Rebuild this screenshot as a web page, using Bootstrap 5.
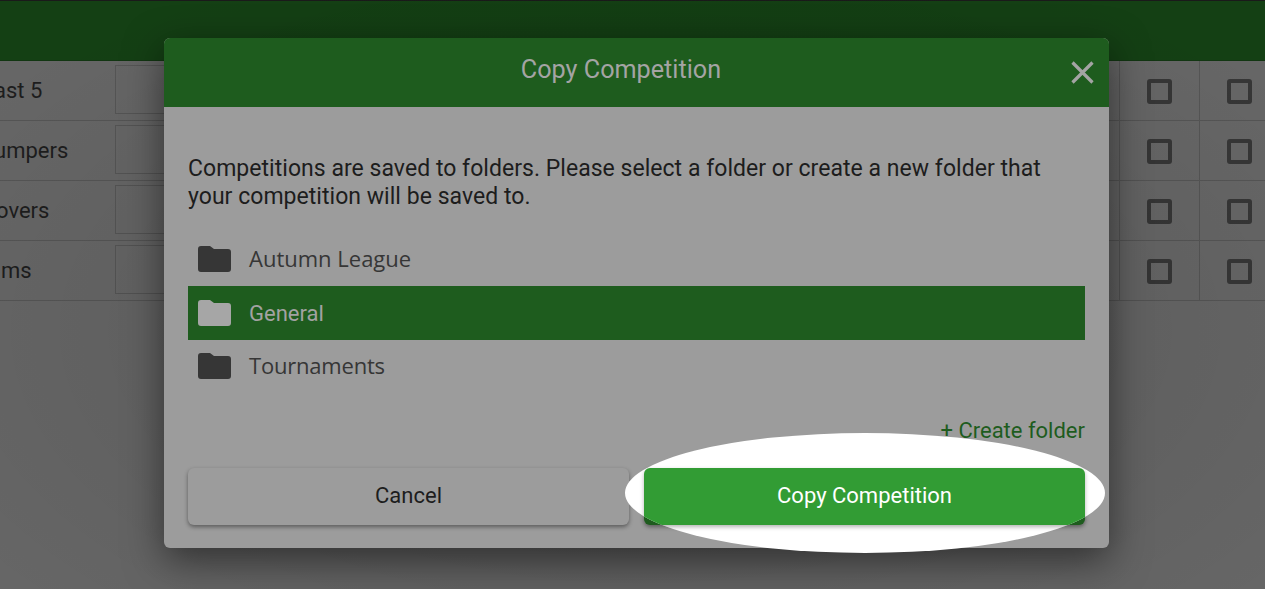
<!DOCTYPE html>
<html lang="en">
<head>
<meta charset="utf-8">
<title>Copy Competition</title>
<link href="https://cdn.jsdelivr.net/npm/bootstrap@5.3.0/dist/css/bootstrap.min.css" rel="stylesheet">
<style>
html,body{height:100%;overflow:hidden}
body{background:#666;font-family:Roboto,"Liberation Sans",sans-serif;color:#1d1d1d}
.stage{position:relative;height:589px;width:1265px;overflow:hidden}
.topbar{height:61px;background:#144014;border-top:1px solid #1a1a1a;border-bottom:1px solid #123612}
.grid-row{height:60px;border-bottom:1px solid #555;font-size:22px;color:#1d1d1d;margin-right:-14px}
.row-name{width:115px;flex:none;overflow:hidden;white-space:nowrap;height:100%;padding-top:13px}
.name-a{margin-left:-6px;width:121px}
.name-b{margin-left:-6px;width:121px}
.name-c{margin-left:-4px;width:119px}
.name-d{padding-left:1px}
.row-box{width:200px;height:49px;flex:none;border:1px solid #555;align-self:flex-start;margin-top:4px}
.row-cell{width:80px;flex:none;height:100%;border-left:1px solid #555;padding-top:2px}
.tick{width:25px;height:25px;border:4px solid #363636;border-radius:3px;display:block}
.vignette{position:absolute;inset:0;pointer-events:none;background:radial-gradient(ellipse 800px 420px at 640px 330px,rgba(0,0,0,.16),rgba(0,0,0,0) 100%)}
.dlg{position:absolute;left:164px;top:38px;width:945px;height:510px;border:0;border-radius:6px;background:#9c9c9c;box-shadow:0 12px 38px rgba(0,0,0,.5);color:#1d1d1d}
.dlg-head{height:69px;background:#1e5c1e;border:0;border-radius:6px 6px 0 0;padding:0;position:relative;color:#a4a4a4}
.dlg-title{font-size:25.2px;font-weight:400;line-height:1;width:914px;text-align:center;margin:0;position:relative;top:-3px}
.dlg-close{position:absolute;left:907px;top:23px;background:none;border:0;padding:0;line-height:0}
.dlg-body{padding:48px 24px 0 24px}
.intro{font-size:23px;line-height:28px;margin:0 0 22px;letter-spacing:.035px}
.folders{margin:0;padding:0;list-style:none}
.folder-row{height:53px;padding:0 0 2px 10px;display:flex;align-items:center;gap:18px;font-family:"Open Sans","Noto Sans",sans-serif;font-size:22px;color:#363636}
.folder-row.picked{height:54px;padding-bottom:0;background:#1e5c1e;color:#a2a2a2;font-family:Roboto,sans-serif}
.folder-narrow{letter-spacing:-.2px}
.folder-row svg{fill:#363636;flex:none}
.folder-row.picked svg{fill:#a6a6a6}
.add-folder{font-size:22px;color:#1e5c1e;text-decoration:none;display:block;text-align:right;line-height:26px;margin-top:25px}
.actions{margin-top:24px;gap:15px}
.act{flex:1 1 0;height:57px;border:0;border-radius:6px;font-size:22px;padding:0 0 2px}
.act-plain{background:#9c9c9c;color:#1d1d1d;box-shadow:0 2px 4px rgba(0,0,0,.42)}
.act-dim{background:#1e5c1e;box-shadow:0 2px 4px rgba(0,0,0,.42)}
.spot{position:absolute;left:461px;top:395px;width:480px;height:120px;border-radius:50%;background:#fff;overflow:hidden}
.act-live{position:absolute;left:19px;top:35px;width:441px;height:57px;background:#329c34;color:#fff;box-shadow:0 2px 4px rgba(0,0,0,.3)}
.act-live:hover{background:#329c34;color:#fff}
</style>
</head>
<body>
<div class="stage">
  <div class="topbar"></div>
  <div class="grid-row d-flex align-items-center">
    <div class="row-name name-a">ast 5</div><div class="row-box"></div><div class="flex-grow-1"></div>
    <div class="row-cell d-flex align-items-center justify-content-center"><span class="tick"></span></div>
    <div class="row-cell d-flex align-items-center justify-content-center"><span class="tick"></span></div>
  </div>
  <div class="grid-row d-flex align-items-center">
    <div class="row-name name-b">umpers</div><div class="row-box"></div><div class="flex-grow-1"></div>
    <div class="row-cell d-flex align-items-center justify-content-center"><span class="tick"></span></div>
    <div class="row-cell d-flex align-items-center justify-content-center"><span class="tick"></span></div>
  </div>
  <div class="grid-row d-flex align-items-center">
    <div class="row-name name-c">overs</div><div class="row-box"></div><div class="flex-grow-1"></div>
    <div class="row-cell d-flex align-items-center justify-content-center"><span class="tick"></span></div>
    <div class="row-cell d-flex align-items-center justify-content-center"><span class="tick"></span></div>
  </div>
  <div class="grid-row d-flex align-items-center">
    <div class="row-name name-d">ms</div><div class="row-box"></div><div class="flex-grow-1"></div>
    <div class="row-cell d-flex align-items-center justify-content-center"><span class="tick"></span></div>
    <div class="row-cell d-flex align-items-center justify-content-center"><span class="tick"></span></div>
  </div>
  <div class="vignette"></div>

  <div class="modal-content dlg">
    <div class="modal-header dlg-head d-flex align-items-center">
      <h5 class="modal-title dlg-title">Copy Competition</h5>
      <button type="button" class="dlg-close" aria-label="Close">
        <svg width="23" height="23" viewBox="0 0 23 23"><path d="M1.5 1.5 21.5 21.5M21.5 1.5 1.5 21.5" stroke="#a4a4a4" stroke-width="3.2" fill="none"/></svg>
      </button>
    </div>
    <div class="modal-body dlg-body">
      <p class="intro">Competitions are saved to folders. Please select a folder or create a new folder that your competition will be saved to.</p>
      <ul class="folders">
        <li class="folder-row"><svg width="33" height="26" viewBox="0 0 33 26"><path d="M3 0h9l4 3h14a3 3 0 0 1 3 3v17a3 3 0 0 1-3 3H3a3 3 0 0 1-3-3V3a3 3 0 0 1 3-3z"/></svg>Autumn League</li>
        <li class="folder-row picked"><svg width="33" height="26" viewBox="0 0 33 26"><path d="M3 0h9l4 3h14a3 3 0 0 1 3 3v17a3 3 0 0 1-3 3H3a3 3 0 0 1-3-3V3a3 3 0 0 1 3-3z"/></svg>General</li>
        <li class="folder-row folder-narrow"><svg width="33" height="26" viewBox="0 0 33 26"><path d="M3 0h9l4 3h14a3 3 0 0 1 3 3v17a3 3 0 0 1-3 3H3a3 3 0 0 1-3-3V3a3 3 0 0 1 3-3z"/></svg>Tournaments</li>
      </ul>
      <a href="#" class="add-folder">+ Create folder</a>
      <div class="d-flex actions">
        <button type="button" class="btn act act-plain">Cancel</button>
        <div class="act act-dim"></div>
      </div>
    </div>
    <div class="spot"><button type="button" class="btn act act-live">Copy Competition</button></div>
  </div>
</div>
<script src="https://cdn.jsdelivr.net/npm/bootstrap@5.3.0/dist/js/bootstrap.bundle.min.js"></script>
</body>
</html>
